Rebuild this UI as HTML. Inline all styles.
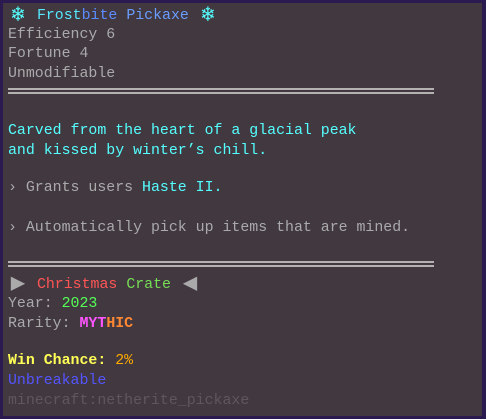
<!DOCTYPE html><html><head><style>
html,body{margin:0;padding:0;width:486px;height:419px;background:#2a2a2a;overflow:hidden}
.box{position:absolute;left:0;top:0;width:486px;height:419px;background:#2b1a4f}
.in{position:absolute;left:3px;top:3px;width:479px;height:413px;background:#413840}
.l{position:absolute;left:8px;font:14.9px "Liberation Mono",monospace;color:#aaaaaa;white-space:pre;line-height:18px}
.sep{position:absolute;left:8px;width:426px;height:2px;background:#b5b0b2}
.c{color:#55ffff}.b{font-weight:bold}
.sf{display:inline-block;width:20px;font-size:22px;line-height:18px;vertical-align:top;color:#55ffff;font-weight:bold;text-align:center}
.tri{display:inline-block;width:20px;font-size:24px;line-height:18px;vertical-align:top;color:#aaa;text-align:center}
</style></head><body><div class="box"></div><div class="in"></div>
<div class="l" style="top:7px"><span class="sf">❄</span> <span style="color:#55e8ff">Frost</span><span style="color:#5b8cff">bite</span> <span style="color:#6a9cff">Pickaxe</span> <span class="sf">❄</span></div>
<div class="l" style="top:26px">Efficiency 6</div>
<div class="l" style="top:45px">Fortune 4</div>
<div class="l" style="top:65px">Unmodifiable</div>
<div class="sep" style="top:88px"></div><div class="sep" style="top:92px"></div>
<div class="l c" style="top:122px">Carved from the heart of a glacial peak</div>
<div class="l c" style="top:142px">and kissed by winter’s chill.</div>
<div class="l" style="top:179px">› Grants users <span class="c">Haste II.</span></div>
<div class="l" style="top:219px">› Automatically pick up items that are mined.</div>
<div class="sep" style="top:261px"></div><div class="sep" style="top:265px"></div>
<div class="l" style="top:276px"><span class="tri">▶</span> <span style="color:#ff5555">Christmas</span> <span style="color:#77dd55">Crate</span> <span class="tri">◀</span></div>
<div class="l" style="top:295px">Year: <span style="color:#55ff55">2023</span></div>
<div class="l" style="top:315px">Rarity: <span class="b" style="color:#ff55ff">MYT</span><span class="b" style="color:#ff8833">HIC</span></div>
<div class="l b" style="top:352px;color:#ffff55">Win Chance: <span style="color:#ffaa00;font-weight:normal">2%</span></div>
<div class="l" style="top:372px;color:#5555ff">Unbreakable</div>
<div class="l" style="top:392px;color:#5e575c">minecraft:netherite_pickaxe</div>
</body></html>
